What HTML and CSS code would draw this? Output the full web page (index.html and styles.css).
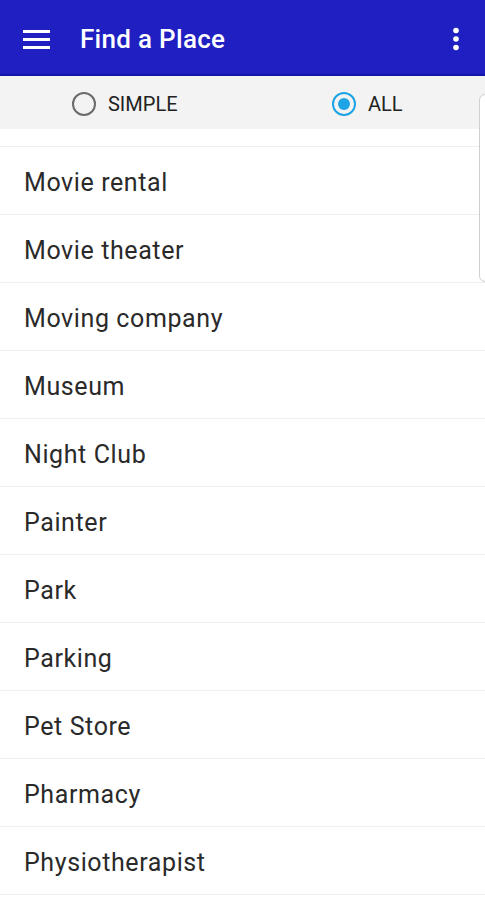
FILE: index.html
```html
<!DOCTYPE html>
<html>
<head>
<meta charset="utf-8">
<link rel="stylesheet" href="styles.css">
</head>
<body>
<div class="app">
  <header class="topbar">
    <svg class="menu" width="27" height="21" viewBox="0 0 27 21"><rect x="0" y="1" width="27" height="3" fill="#fff"/><rect x="0" y="9" width="27" height="3" fill="#fff"/><rect x="0" y="17" width="27" height="3" fill="#fff"/></svg>
    <h1 class="title">Find a Place</h1>
    <svg class="more" width="8" height="24" viewBox="0 0 8 24"><circle cx="4" cy="3.5" r="2.8" fill="#fff"/><circle cx="4" cy="12" r="2.8" fill="#fff"/><circle cx="4" cy="20.5" r="2.8" fill="#fff"/></svg>
  </header>
  <div class="radiobar">
    <div class="half"><span class="radio"></span><span class="rlabel">SIMPLE</span></div>
    <div class="half"><span class="radio on"></span><span class="rlabel">ALL</span></div>
  </div>
  <div class="listwrap">
    <div class="spacer"></div>
    <ul class="list">
      <li>Movie rental</li>
      <li>Movie theater</li>
      <li>Moving company</li>
      <li>Museum</li>
      <li>Night Club</li>
      <li>Painter</li>
      <li>Park</li>
      <li>Parking</li>
      <li>Pet Store</li>
      <li>Pharmacy</li>
      <li>Physiotherapist</li>
    </ul>
    <div class="thumb"></div>
  </div>
</div>
</body>
</html>
```
FILE: styles.css
```css
* { box-sizing: border-box; }
html, body { margin: 0; padding: 0; background: #fff; }
body { font-family: Roboto, "Noto Sans", sans-serif; overflow: hidden; }
.app { width: 485px; height: 900px; position: relative; overflow: hidden; }
.topbar {
  height: 76px;
  background: #2020c2;
  border-bottom: 2px solid #1414a8;
  display: flex;
  align-items: center;
  padding: 4px 25px 0 23px;
}
.menu { display: block; }
.title {
  margin: 0 0 0 30px;
  flex: 1;
  color: #fff;
  font-size: 26px;
  font-weight: 500;
  letter-spacing: 0.3px;
}
.more { display: block; }
.radiobar {
  height: 53px;
  background: #f3f3f3;
  display: flex;
}
.half {
  flex: 1;
  display: flex;
  align-items: center;
  justify-content: center;
  gap: 12px;
  padding-top: 2px;
  padding-left: 7px;
}
.radio {
  width: 24px; height: 24px;
  border: 2px solid #6a6a6a;
  border-radius: 50%;
  position: relative;
}
.radio.on { border-color: #1ea4e6; }
.radio.on::after {
  content: "";
  position: absolute;
  left: 4px; top: 4px;
  width: 12px; height: 12px;
  border-radius: 50%;
  background: #1ea4e6;
}
.rlabel { font-size: 20px; color: #222; }
.listwrap { position: relative; }
.spacer { height: 18px; border-bottom: 1px solid #efefef; }
.list { list-style: none; margin: 0; padding: 0; }
.list li {
  height: 68px;
  border-bottom: 1px solid #f0f0f0;
  display: flex;
  align-items: center;
  padding: 4px 0 0 24px;
  font-size: 25px;
  letter-spacing: 0.6px;
  color: #2a2a2a;
}
.thumb {
  position: absolute;
  right: -6px;
  top: -35px;
  width: 12px;
  height: 188px;
  border: 1px solid #cfcfcf;
  border-radius: 6px;
  background: #fff;
}
```
